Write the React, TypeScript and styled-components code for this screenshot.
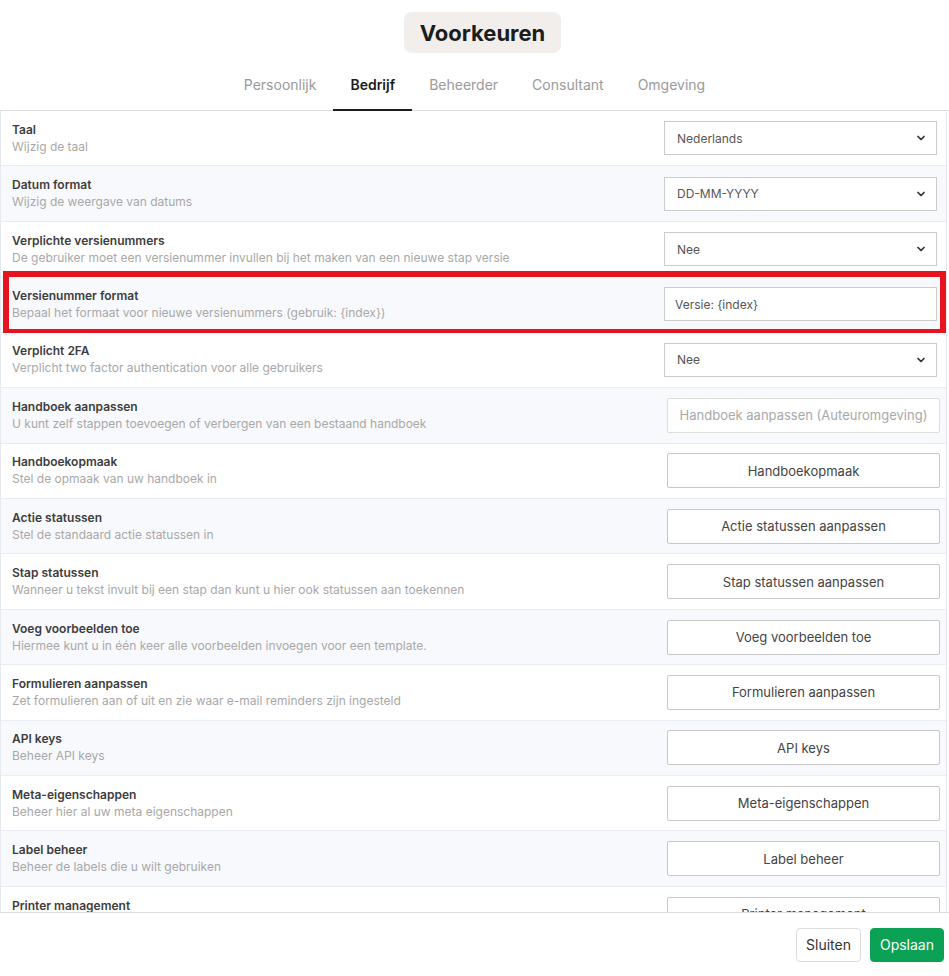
import React from "react"
import styled, { createGlobalStyle } from "styled-components"
import { ChevronDown } from "lucide-react"

const GlobalStyle = createGlobalStyle`
  html, body {
    margin: 0;
    padding: 0;
    background: #ffffff;
    font-family: Inter, "Noto Sans", sans-serif;
    color: #333;
  }
  * {
    box-sizing: border-box;
  }
`

const Page = styled.div`
  width: 949px;
  height: 976px;
  display: flex;
  flex-direction: column;
  overflow: hidden;
`

const Header = styled.div`
  display: flex;
  flex-direction: column;
  align-items: center;
  padding-top: 12px;
`

const Title = styled.h1`
  margin: 0 0 0 16px;
  height: 41px;
  padding: 0 16px;
  display: flex;
  align-items: center;
  background: #f1eeeb;
  border-radius: 8px;
  font-size: 22px;
  font-weight: 700;
  color: #1c1c1c;
`

const Tabs = styled.div`
  display: flex;
  justify-content: center;
  width: 100%;
  margin-top: 16px;
  border-bottom: 1px solid #dedede;
`

const Tab = styled.div<{ $active?: boolean }>`
  padding: 7px 17px 16px;
  font-size: 14px;
  font-weight: ${({ $active }) => ($active ? 600 : 400)};
  color: ${({ $active }) => ($active ? "#1c1c1c" : "#9a9a9a")};
  border-bottom: 2px solid ${({ $active }) => ($active ? "#1c1c1c" : "transparent")};
  margin-bottom: -1px;
`

const Scroller = styled.div`
  flex: 1;
  overflow: hidden;
  border-left: 1px solid #e6e9ef;
  border-right: 1px solid #e6e9ef;
  margin-right: 2px;
`

const Row = styled.div<{ $alt?: boolean; $highlight?: boolean }>`
  position: relative;
  height: 55.43px;
  display: flex;
  align-items: center;
  justify-content: space-between;
  padding: 0 0 0 11px;
  background: ${({ $alt }) => ($alt ? "#f8f9fc" : "#ffffff")};
  border-bottom: 1px solid #e9ecf2;
  ${({ $highlight }) =>
    $highlight &&
    `
    &::after {
      content: "";
      position: absolute;
      left: 2px;
      right: 0;
      top: -6px;
      bottom: -3px;
      border: 6px solid #e5141f;
      pointer-events: none;
    }
  `}
`

const Info = styled.div`
  display: flex;
  flex-direction: column;
  gap: 1px;
`

const Label = styled.div`
  font-size: 12px;
  font-weight: 600;
  color: #3d3d3d;
  line-height: 16px;
`

const Desc = styled.div`
  font-size: 12px;
  color: #a8a8a8;
  line-height: 16px;
`

const SelectWrap = styled.div`
  position: relative;
  width: 273px;
  margin-right: 9px;
`

const Select = styled.select`
  appearance: none;
  width: 100%;
  height: 34px;
  padding: 0 12px;
  font-family: Inter, "Noto Sans", sans-serif;
  font-size: 12px;
  color: #555;
  background: #ffffff;
  border: 1px solid #cccccc;
  border-radius: 0;
`

const Arrow = styled.span`
  position: absolute;
  right: 10px;
  top: 11px;
  color: #333;
  display: flex;
  pointer-events: none;
`

const TextInput = styled.input`
  width: 273px;
  height: 34px;
  margin-right: 9px;
  padding: 0 10px;
  font-family: Inter, "Noto Sans", sans-serif;
  font-size: 12px;
  color: #555;
  background: #ffffff;
  border: 1px solid #cccccc;
  border-radius: 0;
`

const ActionButton = styled.button<{ $disabled?: boolean }>`
  width: 273px;
  height: 35px;
  margin-right: 6px;
  font-family: Inter, "Noto Sans", sans-serif;
  font-size: 13px;
  color: ${({ $disabled }) => ($disabled ? "#a8a8a8" : "#444")};
  background: #ffffff;
  border: 1px solid ${({ $disabled }) => ($disabled ? "#dddddd" : "#c8c8c8")};
  border-radius: 2px;
`

const Footer = styled.div`
  height: 64px;
  flex-shrink: 0;
  display: flex;
  align-items: center;
  justify-content: flex-end;
  gap: 9px;
  padding-right: 5px;
  border-top: 1px solid #dcdcdc;
`

const FooterButton = styled.button<{ $primary?: boolean }>`
  height: 34px;
  padding: 0 9px;
  font-family: Inter, "Noto Sans", sans-serif;
  font-size: 14px;
  border-radius: 4px;
  color: ${({ $primary }) => ($primary ? "#ffffff" : "#333")};
  background: ${({ $primary }) => ($primary ? "#0ba255" : "#ffffff")};
  border: 1px solid ${({ $primary }) => ($primary ? "#0ba255" : "#dddddd")};
`

type Setting = {
  label: string
  desc: string
  kind: "select" | "input" | "button"
  value: string
  disabled?: boolean
  highlight?: boolean
}

const settings: Setting[] = [
  { label: "Taal", desc: "Wijzig de taal", kind: "select", value: "Nederlands" },
  { label: "Datum format", desc: "Wijzig de weergave van datums", kind: "select", value: "DD-MM-YYYY" },
  {
    label: "Verplichte versienummers",
    desc: "De gebruiker moet een versienummer invullen bij het maken van een nieuwe stap versie",
    kind: "select",
    value: "Nee",
  },
  {
    label: "Versienummer format",
    desc: "Bepaal het formaat voor nieuwe versienummers (gebruik: {index})",
    kind: "input",
    value: "Versie: {index}",
    highlight: true,
  },
  { label: "Verplicht 2FA", desc: "Verplicht two factor authentication voor alle gebruikers", kind: "select", value: "Nee" },
  {
    label: "Handboek aanpassen",
    desc: "U kunt zelf stappen toevoegen of verbergen van een bestaand handboek",
    kind: "button",
    value: "Handboek aanpassen (Auteuromgeving)",
    disabled: true,
  },
  { label: "Handboekopmaak", desc: "Stel de opmaak van uw handboek in", kind: "button", value: "Handboekopmaak" },
  { label: "Actie statussen", desc: "Stel de standaard actie statussen in", kind: "button", value: "Actie statussen aanpassen" },
  {
    label: "Stap statussen",
    desc: "Wanneer u tekst invult bij een stap dan kunt u hier ook statussen aan toekennen",
    kind: "button",
    value: "Stap statussen aanpassen",
  },
  {
    label: "Voeg voorbeelden toe",
    desc: "Hiermee kunt u in één keer alle voorbeelden invoegen voor een template.",
    kind: "button",
    value: "Voeg voorbeelden toe",
  },
  {
    label: "Formulieren aanpassen",
    desc: "Zet formulieren aan of uit en zie waar e-mail reminders zijn ingesteld",
    kind: "button",
    value: "Formulieren aanpassen",
  },
  { label: "API keys", desc: "Beheer API keys", kind: "button", value: "API keys" },
  { label: "Meta-eigenschappen", desc: "Beheer hier al uw meta eigenschappen", kind: "button", value: "Meta-eigenschappen" },
  { label: "Label beheer", desc: "Beheer de labels die u wilt gebruiken", kind: "button", value: "Label beheer" },
  { label: "Printer management", desc: "Beheer printers voor het afdrukken van labels", kind: "button", value: "Printer management" },
]

const Control = ({ s }: { s: Setting }) => {
  if (s.kind === "select") {
    return (
      <SelectWrap>
        <Select defaultValue={s.value}>
          <option>{s.value}</option>
        </Select>
        <Arrow>
          <ChevronDown size={12} strokeWidth={3.5} />
        </Arrow>
      </SelectWrap>
    )
  }
  if (s.kind === "input") {
    return <TextInput defaultValue={s.value} />
  }
  return <ActionButton $disabled={s.disabled}>{s.value}</ActionButton>
}

const tabs = ["Persoonlijk", "Bedrijf", "Beheerder", "Consultant", "Omgeving"]

const App = () => {
  return (
    <Page>
      <GlobalStyle />
      <Header>
        <Title>Voorkeuren</Title>
        <Tabs>
          {tabs.map((t) => (
            <Tab key={t} $active={t === "Bedrijf"}>
              {t}
            </Tab>
          ))}
        </Tabs>
      </Header>
      <Scroller>
        {settings.map((s, i) => (
          <Row key={s.label} $alt={i % 2 === 1} $highlight={s.highlight}>
            <Info>
              <Label>{s.label}</Label>
              <Desc>{s.desc}</Desc>
            </Info>
            <Control s={s} />
          </Row>
        ))}
      </Scroller>
      <Footer>
        <FooterButton>Sluiten</FooterButton>
        <FooterButton $primary>Opslaan</FooterButton>
      </Footer>
    </Page>
  )
}

export default App
